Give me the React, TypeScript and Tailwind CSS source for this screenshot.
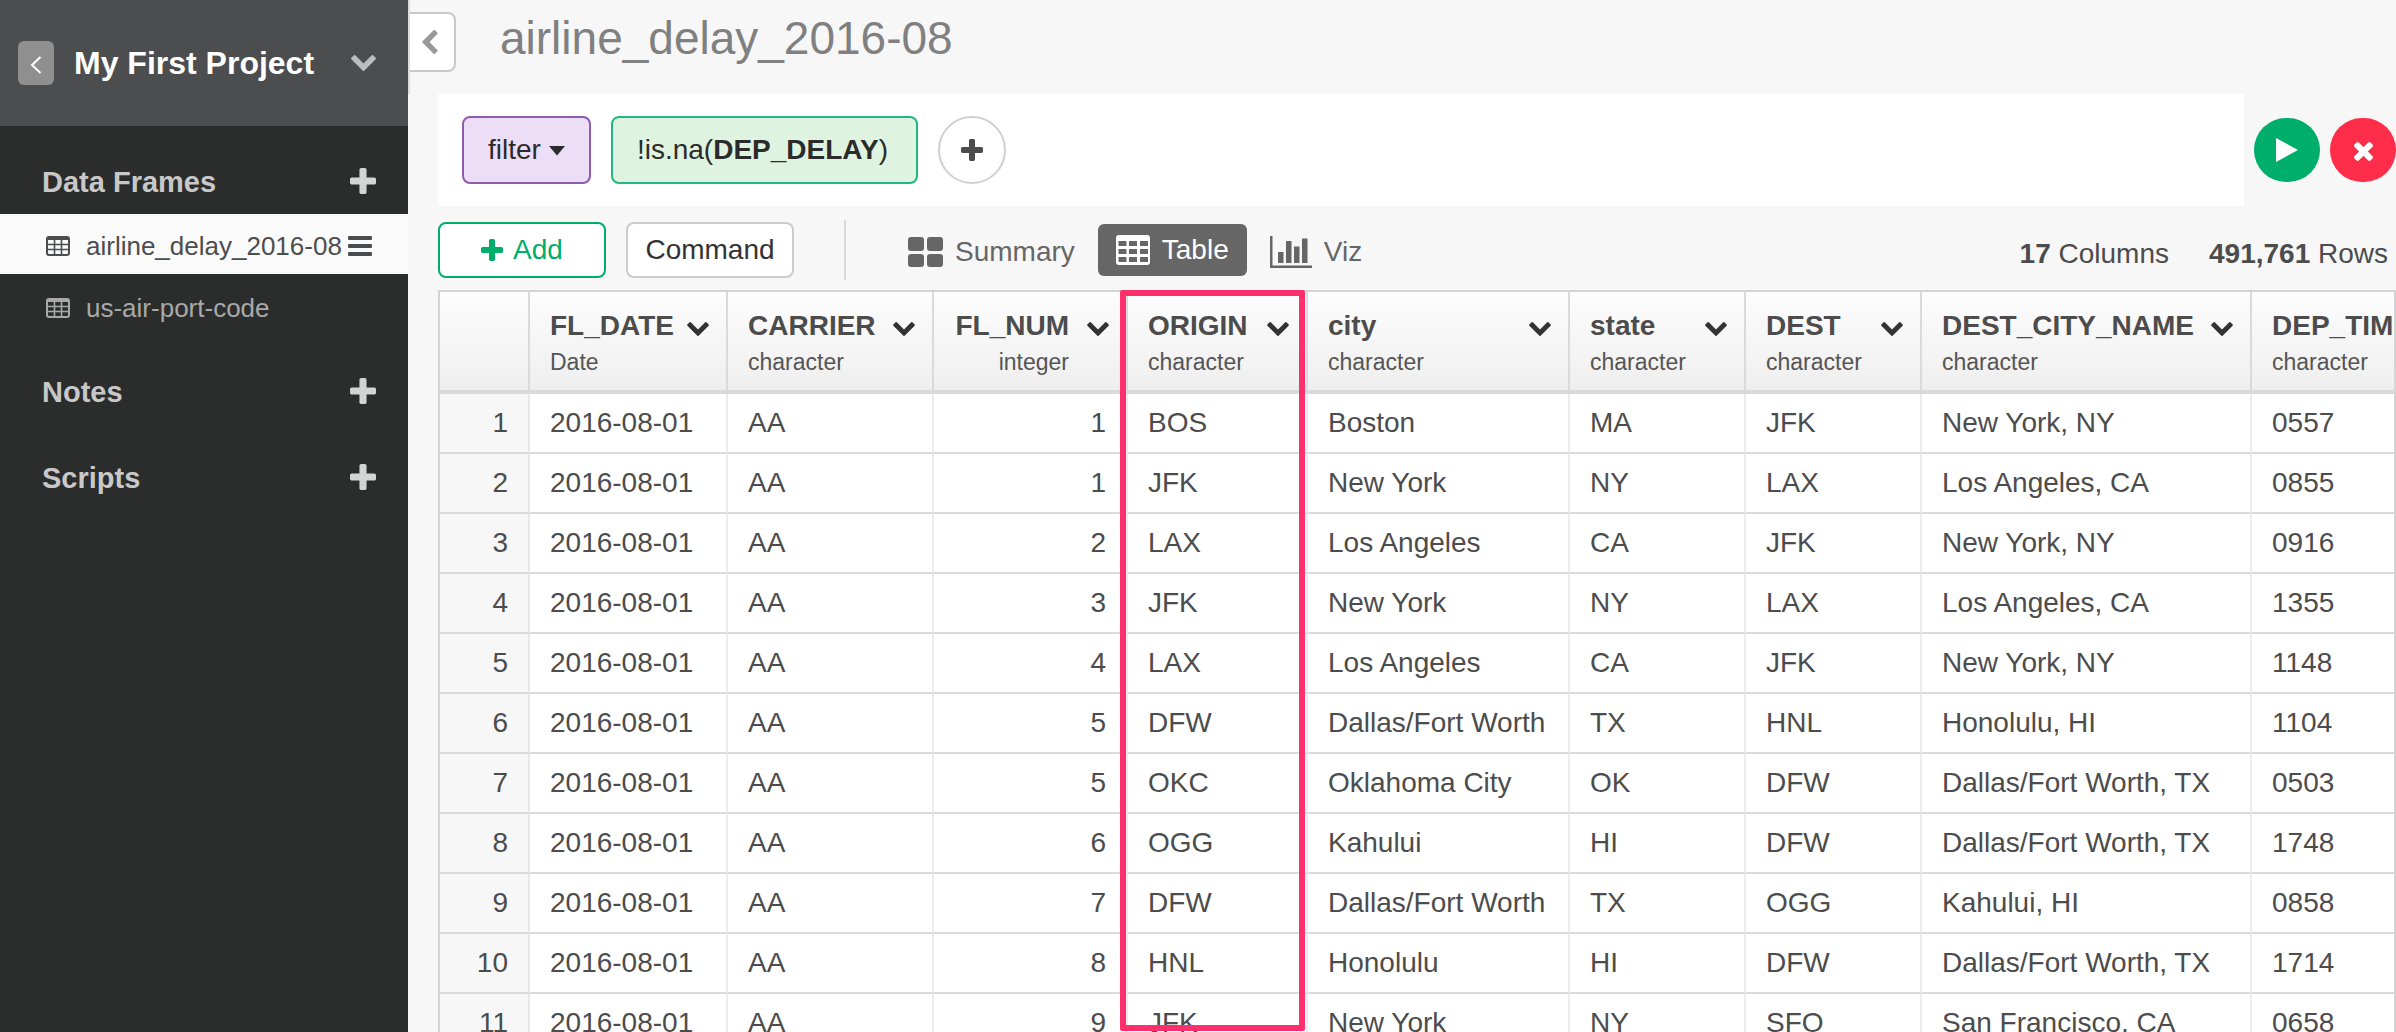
import type { ReactNode } from "react";

type IconProps = { className?: string };

function ChevronDown({ className }: IconProps) {
  return (
    <svg viewBox="90 533 1612 1035" fill="currentColor" className={className} aria-hidden="true">
      <path d="M1683 808l-742 741q-19 19-45 19t-45-19l-742-741q-19-19-19-45.500t19-45.500l166-165q19-19 45-19t45 19l531 531 531-531q19-19 45-19t45 19l166 165q19 19 19 45.500t-19 45.500z" />
    </svg>
  );
}

function ChevronLeft({ className }: IconProps) {
  return (
    <svg viewBox="0 0 1035 1612" fill="currentColor" className={className} aria-hidden="true">
      <path
        transform="rotate(90) translate(-90 -1568)"
        d="M1683 808l-742 741q-19 19-45 19t-45-19l-742-741q-19-19-19-45.500t19-45.500l166-165q19-19 45-19t45 19l531 531 531-531q19-19 45-19t45 19l166 165q19 19 19 45.500t-19 45.500z"
      />
    </svg>
  );
}

function Plus({ className }: IconProps) {
  return (
    <svg viewBox="192 128 1408 1408" fill="currentColor" className={className} aria-hidden="true">
      <path d="M1600 736v192q0 40-28 68t-68 28h-416v416q0 40-28 68t-68 28h-192q-40 0-68-28t-28-68v-416h-416q-40 0-68-28t-28-68v-192q0-40 28-68t68-28h416v-416q0-40 28-68t68-28h192q40 0 68 28t28 68v416h416q40 0 68 28t28 68z" />
    </svg>
  );
}

function Cross({ className }: IconProps) {
  return (
    <svg viewBox="302 366 1188 1188" fill="currentColor" className={className} aria-hidden="true">
      <path d="M1490 1322q0 40-28 68l-136 136q-28 28-68 28t-68-28l-294-294-294 294q-28 28-68 28t-68-28l-136-136q-28-28-28-68t28-68l294-294-294-294q-28-28-28-68t28-68l136-136q28-28 68-28t68 28l294 294 294-294q28-28 68-28t68 28l136 136q28 28 28 68t-28 68l-294 294 294 294q28 28 28 68z" />
    </svg>
  );
}

function GridSmall({ className }: IconProps) {
  return (
    <svg viewBox="0 0 24 20" fill="none" stroke="currentColor" className={className} aria-hidden="true">
      <rect x="1" y="1" width="22" height="18" rx="2" strokeWidth="2" />
      <path d="M1 2.500H23" strokeWidth="3" />
      <path d="M1 8.500H23M1 13.500H23M8.500 3V19M15.500 3V19" strokeWidth="1.600" />
    </svg>
  );
}

function GridLarge({ className }: IconProps) {
  return (
    <svg viewBox="0 0 34 30" fill="currentColor" className={className} aria-hidden="true">
      <path
        fillRule="evenodd"
        d="M3 0H31a3 3 0 0 1 3 3V27a3 3 0 0 1-3 3H3a3 3 0 0 1-3-3V3a3 3 0 0 1 3-3ZM2.500 6V11H10.500V6ZM13 6V11H21V6ZM24 6V11H32V6ZM2.500 14V19H10.500V14ZM13 14V19H21V14ZM24 14V19H32V14ZM2.500 22V27H10.500V22ZM13 22V27H21V22ZM24 22V27H32V22Z"
      />
    </svg>
  );
}

function Tiles({ className }: IconProps) {
  return (
    <svg viewBox="0 0 35 30" fill="currentColor" className={className} aria-hidden="true">
      <rect width="16" height="14" rx="3" />
      <rect x="19" width="16" height="14" rx="3" />
      <rect y="17" width="16" height="13" rx="3" />
      <rect x="19" y="17" width="16" height="13" rx="3" />
    </svg>
  );
}

function Bars({ className }: IconProps) {
  return (
    <svg viewBox="0 0 42 32" fill="currentColor" className={className} aria-hidden="true">
      <path d="M0 0H2.500V29.500H42V32H0ZM8 16H13.500V27H8ZM16 5H21.500V27H16ZM24 10.500H29.500V27H24ZM32 2.500H37.500V27H32Z" />
    </svg>
  );
}

type Column = { name: string; type: string; width: number; numeric?: boolean };

const columns: Column[] = [
  { name: "FL_DATE", type: "Date", width: 198 },
  { name: "CARRIER", type: "character", width: 206 },
  { name: "FL_NUM", type: "integer", width: 194, numeric: true },
  { name: "ORIGIN", type: "character", width: 180 },
  { name: "city", type: "character", width: 262 },
  { name: "state", type: "character", width: 176 },
  { name: "DEST", type: "character", width: 176 },
  { name: "DEST_CITY_NAME", type: "character", width: 330 },
  { name: "DEP_TIME", type: "character", width: 220 },
];

const rows: string[][] = [
  ["1", "BOS", "Boston", "MA", "JFK", "New York, NY", "0557"],
  ["1", "JFK", "New York", "NY", "LAX", "Los Angeles, CA", "0855"],
  ["2", "LAX", "Los Angeles", "CA", "JFK", "New York, NY", "0916"],
  ["3", "JFK", "New York", "NY", "LAX", "Los Angeles, CA", "1355"],
  ["4", "LAX", "Los Angeles", "CA", "JFK", "New York, NY", "1148"],
  ["5", "DFW", "Dallas/Fort Worth", "TX", "HNL", "Honolulu, HI", "1104"],
  ["5", "OKC", "Oklahoma City", "OK", "DFW", "Dallas/Fort Worth, TX", "0503"],
  ["6", "OGG", "Kahului", "HI", "DFW", "Dallas/Fort Worth, TX", "1748"],
  ["7", "DFW", "Dallas/Fort Worth", "TX", "OGG", "Kahului, HI", "0858"],
  ["8", "HNL", "Honolulu", "HI", "DFW", "Dallas/Fort Worth, TX", "1714"],
  ["9", "JFK", "New York", "NY", "SFO", "San Francisco, CA", "0658"],
].map((row) => ["2016-08-01", "AA", ...row]);

function SectionHeading({ children }: { children: string }) {
  return (
    <div className="flex h-[86px] items-center justify-between pr-8 pl-[42px]">
      <h2 className="pt-0.5 text-[29px] leading-9 font-bold text-[#c8c8c8]">{children}</h2>
      <button type="button" aria-label={"Add to " + children} className="text-[#d4d4d4]">
        <Plus className="size-[26px]" />
      </button>
    </div>
  );
}

function Sidebar() {
  return (
    <aside className="flex w-[408px] shrink-0 flex-col bg-[#2b2d2c]">
      <div className="flex h-[126px] items-center bg-[#4c4d4e] pr-8 pl-[18px]">
        <button
          type="button"
          aria-label="Back"
          className="flex h-11 w-9 items-center justify-center rounded-md bg-[#8f8f8f] text-white"
        >
          <svg viewBox="0 0 12 18" className="mt-1 h-[18px] w-3" fill="none" stroke="currentColor" strokeWidth="2" aria-hidden="true">
            <path d="M10.500 1L2 9l8.500 8" />
          </svg>
        </button>
        <h1 className="ml-5 flex-1 text-[32px] leading-10 font-bold whitespace-nowrap text-white">My First Project</h1>
        <button type="button" aria-label="Project menu" className="text-[#bdbdbd]">
          <ChevronDown className="h-4 w-[25px]" />
        </button>
      </div>
      <nav className="pt-3">
        <div className="-mb-2.5">
          <SectionHeading>Data Frames</SectionHeading>
        </div>
        <ul className="text-[26px] leading-8">
          <li className="flex h-[60px] items-center bg-[#fafafa] pt-1 pr-9 pl-[46px] text-[#4c4d4e]">
            <GridSmall className="h-5 w-6" />
            <a href="#airline" className="ml-4 flex-1 whitespace-nowrap">airline_delay_2016-08</a>
            <button type="button" aria-label="Data frame menu">
              <svg viewBox="0 0 24 20" className="h-5 w-6" fill="currentColor" aria-hidden="true">
                <rect width="24" height="4" rx="1" />
                <rect y="8" width="24" height="4" rx="1" />
                <rect y="16" width="24" height="4" rx="1" />
              </svg>
            </button>
          </li>
          <li className="flex h-[68px] items-center pl-[46px] text-[#a9a9a9]">
            <GridSmall className="h-5 w-6" />
            <a href="#airport" className="ml-4">us-air-port-code</a>
          </li>
        </ul>
        <div className="pt-1.5">
          <SectionHeading>Notes</SectionHeading>
          <SectionHeading>Scripts</SectionHeading>
        </div>
      </nav>
    </aside>
  );
}

function Tab({ icon, label, active }: { icon: ReactNode; label: string; active?: boolean }) {
  return (
    <button
      type="button"
      aria-pressed={!!active}
      className={
        active
          ? "flex h-[52px] items-center gap-3 rounded-md bg-[#666666] px-[18px] text-white"
          : "flex h-[52px] items-center gap-3 pt-1 text-[#666666]"
      }
    >
      {icon}
      {label}
    </button>
  );
}

function DataTable() {
  return (
    <div className="relative min-h-0 flex-1">
      <div className="h-full overflow-hidden border-x-2 border-t-2 border-[#d4d4d4] bg-white">
        <table className="w-max table-fixed border-separate border-spacing-0 text-[28px] leading-8 text-[#4c4c4c]">
          <colgroup>
            <col className="w-[90px]" />
            {columns.map((c) => (
              <col key={c.name} style={{ width: c.width }} />
            ))}
          </colgroup>
          <thead>
            <tr className="h-[102px] bg-linear-to-b from-[#fdfdfd] to-[#eeeeee]">
              <th className="border-r-2 border-b-4 border-[#dadada]" aria-label="Row" />
              {columns.map((c) => (
                <th key={c.name} scope="col" className="border-r-2 border-b-4 border-[#dadada] p-0 pt-1.5 pr-[17px] pl-5 align-middle">
                  <div className={c.numeric ? "flex justify-end gap-[18px] text-right" : "flex justify-between text-left"}>
                    <div>
                      <div className="leading-9 font-bold">{c.name}</div>
                      <div className="text-[23px] leading-9 font-normal text-[#555555]">{c.type}</div>
                    </div>
                    <button type="button" aria-label={c.name + " menu"} className="mt-3.5 h-[14px] text-[#333333]">
                      <ChevronDown className="h-[14px] w-[22px]" />
                    </button>
                  </div>
                </th>
              ))}
            </tr>
          </thead>
          <tbody>
            {rows.map((row, i) => (
              <tr key={i} className="h-[60px]">
                <th scope="row" className="border-r-2 border-b-2 border-r-[#e8e8e8] border-b-[#dadada] bg-[#f7f7f7] p-0 pr-5 text-right font-normal">
                  {i + 1}
                </th>
                {row.map((value, j) => (
                  <td
                    key={j}
                    className={
                      columns[j].numeric
                        ? "border-r-2 border-b-2 border-r-[#ececec] border-b-[#dadada] p-0 pr-5 text-right"
                        : "border-r-2 border-b-2 border-r-[#ececec] border-b-[#dadada] p-0 pl-5 whitespace-nowrap"
                    }
                  >
                    {value}
                  </td>
                ))}
              </tr>
            ))}
          </tbody>
        </table>
      </div>
      <div className="pointer-events-none absolute top-0 bottom-px left-[682px] w-[185px] rounded-xs border-6 border-[#ff2f6d]" />
    </div>
  );
}

export default function App() {
  return (
    <div className="flex h-screen overflow-hidden bg-[#f7f7f7] font-['Liberation_Sans',Arial,sans-serif] text-[28px] leading-8 text-[#4c4c4c]">
      <Sidebar />
      <main className="flex min-w-0 flex-1 flex-col">
        <header className="flex h-[94px] items-start border-l-2 border-[#dddddd]">
          <button
            type="button"
            aria-label="Collapse sidebar"
            className="mt-3 flex h-[60px] w-[46px] items-center justify-center rounded-r-lg border-2 border-l-0 border-[#c8c8c8] bg-white pr-1 text-[#999999]"
          >
            <ChevronLeft className="h-6 w-4" />
          </button>
          <h2 className="mt-3 ml-11 text-[46px] leading-[52px] text-[#808080]">airline_delay_2016-08</h2>
        </header>
        <div className="flex min-h-0 flex-1 flex-col pl-[30px]">
          <div className="flex items-center">
            <div className="flex h-28 flex-1 items-center gap-5 bg-white px-6 text-[#2b2b2b]">
              <button type="button" className="flex h-[68px] items-center gap-2 rounded-lg border-2 border-[#8e5bb0] bg-[#ecdef7] px-6">
                filter
                <svg viewBox="0 0 16 10" className="mt-0.5 h-[10px] w-4" fill="currentColor" aria-hidden="true">
                  <path d="M0 0H16L8 9.500Z" />
                </svg>
              </button>
              <button type="button" className="h-[68px] rounded-lg border-2 border-[#1fb981] bg-[#dff3e1] pr-7 pl-6">
                !is.na(<b>DEP_DELAY</b>)
              </button>
              <button
                type="button"
                aria-label="Add condition"
                className="flex size-[68px] items-center justify-center rounded-full border-2 border-[#d0d0d0] bg-white text-[#4c4c4c]"
              >
                <Plus className="size-[22px]" />
              </button>
            </div>
            <div className="flex gap-2.5 pl-2.5">
              <button type="button" aria-label="Run" className="flex h-16 w-[66px] items-center justify-center rounded-full bg-[#00ae6b] text-white">
                <svg viewBox="0 0 22 24" className="h-6 w-[22px]" fill="currentColor" aria-hidden="true">
                  <path d="M0 0L22 12L0 24Z" />
                </svg>
              </button>
              <button type="button" aria-label="Cancel" className="flex h-16 w-[66px] items-center justify-center rounded-full bg-[#ff2d49] pt-0.5 text-white">
                <Cross className="size-[19px]" />
              </button>
            </div>
          </div>
          <div className="flex h-[84px] items-center pr-2">
            <button
              type="button"
              className="mt-1 flex h-14 w-[168px] items-center justify-center gap-2.5 rounded-lg border-2 border-[#00ae6b] bg-white text-[#00ae6b]"
            >
              <Plus className="size-[22px]" />
              Add
            </button>
            <button type="button" className="mt-1 ml-5 h-14 w-[168px] rounded-lg border-2 border-[#cccccc] bg-white text-[#333333]">
              Command
            </button>
            <div className="mt-1 mr-[62px] ml-[50px] h-[60px] w-0.5 bg-[#d8d8d8]" />
            <div className="mt-1 flex items-center gap-[23px]">
              <Tab icon={<Tiles className="h-[30px] w-[35px]" />} label="Summary" />
              <Tab icon={<GridLarge className="h-[30px] w-[34px]" />} label="Table" active />
              <Tab icon={<Bars className="h-8 w-[42px]" />} label="Viz" />
            </div>
            <p className="mt-3 ml-auto flex gap-10">
              <span><b>17</b> Columns</span>
              <span><b>491,761</b> Rows</span>
            </p>
          </div>
          <DataTable />
        </div>
      </main>
    </div>
  );
}
